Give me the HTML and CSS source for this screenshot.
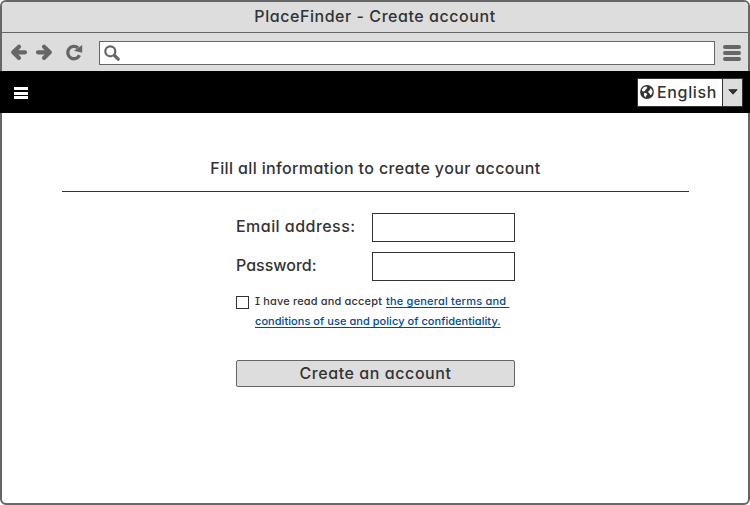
FILE: index.html
```html
<!DOCTYPE html>
<html lang="en">
<head>
<meta charset="utf-8">
<title>PlaceFinder - Create account</title>
<link rel="stylesheet" href="styles.css">
</head>
<body>
<div class="window">
  <div class="titlebar"><span class="window-title">PlaceFinder - Create account</span></div>
  <div class="toolbar">
    <svg class="nav" width="76" height="18" viewBox="0 0 76 18" fill="none" stroke="#666" stroke-width="4.2">
      <path d="M16 9.300H5M10 3.700L4.200 9.300L10 14.900" stroke-linecap="round" stroke-linejoin="round"/>
      <path d="M29 9.300H40M35 3.700L40.800 9.300L35 14.900" stroke-linecap="round" stroke-linejoin="round"/>
      <path d="M70.500 12.300A6.200 6.200 0 1 1 69 4.800" stroke-width="3.300"/>
      <path d="M73.200 2V9.800L65 7.800Z" fill="#666" stroke="none"/>
    </svg>
    <div class="address">
      <svg width="18" height="18" viewBox="0 0 18 18" fill="none" stroke="#666"><circle cx="6.300" cy="6.300" r="5" stroke-width="2.200"/><path d="M10.500 10.500L14.300 14.200" stroke-width="3.200" stroke-linecap="round"/></svg>
    </div>
    <div class="menu"><i></i><i></i><i></i></div>
  </div>
  <header class="appbar">
    <div class="burger"><i></i><i></i><i></i></div>
    <div class="language">
      <div class="language-value">
        <svg width="14" height="14" viewBox="0 0 14 14"><circle cx="7" cy="7" r="6.900" fill="#333"/><path d="M1.800 4.500L3.800 2.200L6 1.400L7.500 1.900L6.400 3L7 3.800L5.600 4.600L4.800 6L3.500 6.600L2.200 6ZM4.200 7.800L6.300 8.200L7.300 9.400L6.200 10.800L5.400 12.400L4.300 11L4 9.400ZM9.800 2.700L11.600 4.200L12.500 6.300L12.300 8L11.300 9.800L10.200 10.200L9.700 8.400L8.300 7.500L8.500 6L9.900 5.100L10.400 4Z" fill="#fff"/></svg>
        <span>English</span>
      </div>
      <div class="language-arrow"><svg width="10" height="6" viewBox="0 0 10 6"><path d="M.8 .7H9.200L5 5.200Z" fill="#333" stroke="#333" stroke-linejoin="round"/></svg></div>
    </div>
  </header>
  <main>
    <h1><span>Fill all information to create your account</span></h1>
    <form class="form">
      <div class="row"><label class="email" for="email">Email address:</label><input id="email" type="text"></div>
      <div class="row"><label class="password" for="password">Password:</label><input id="password" type="password"></div>
      <div class="terms">
        <span class="checkbox"></span>
        <p><span class="accept">I have read and accept</span><a class="link-a">the general terms and&nbsp;</a><br><a class="link-b">conditions of use and policy of confidentiality.</a></p>
      </div>
      <button type="button"><span>Create an account</span></button>
    </form>
  </main>
</div>
</body>
</html>
```
FILE: styles.css
```css
* { box-sizing: border-box; }
body { margin: 0; background: #fff; color: #333; font: 500 16px/20px Inter, "Liberation Sans", sans-serif; font-feature-settings: "cv11", "cv08"; }
.window { height: 505px; border: 2px solid #666; border-radius: 6px; display: flex; flex-direction: column; }
.titlebar { height: 31px; background: #ddd; border-bottom: 1px solid #666; border-radius: 4px 4px 0 0; display: flex; justify-content: center; padding-top: 4px; }
.window-title { letter-spacing: .55px; }
.toolbar { height: 38px; background: #ddd; display: flex; align-items: center; padding: 0 7px; }
.nav { overflow: visible; margin-right: 14px; }
.address { width: 616px; height: 24px; margin-top: 2px; border: 1px solid #666; background: #fff; padding: 3px 0 0 4px; line-height: 0; }
.menu { width: 18px; margin: 2px 0 0 8px; display: grid; gap: 2px; }
.menu i { height: 4px; border-radius: 2px; background: #666; }
.appbar { height: 42px; margin: 0 -2px; background: #000; display: flex; justify-content: space-between; align-items: center; padding: 0 7px 0 14px; }
.burger { width: 14px; display: grid; gap: 1.5px; padding-top: 2px; }
.burger i { height: 3px; background: #fff; }
.language { width: 106px; height: 29px; margin-top: 1px; border: 1px solid #333; background: #fff; display: flex; }
.language-value { width: 85px; display: flex; align-items: center; gap: 3px; padding: 0 0 2px 2px; letter-spacing: .65px; }
.language-arrow { width: 20px; background: #ddd; border-left: 1px solid #333; display: flex; align-items: center; justify-content: center; padding-bottom: 1px; }
main { padding: 0 59px 0 60px; }
h1 { height: 79px; margin: 0; padding-top: 45px; border-bottom: 1px solid #333; font-size: 16px; font-weight: 500; text-align: center; letter-spacing: .37px; }
.form { width: 279px; margin: 21px 0 0 174px; }
.row { display: flex; justify-content: space-between; height: 29px; margin-bottom: 10px; white-space: nowrap; }
label { padding-top: 3px; }
.email { letter-spacing: .46px; }
.password { letter-spacing: 0; }
input { width: 143px; height: 29px; border: 1px solid #333; background: #fff; padding: 0 6px; font: inherit; }
.terms { display: flex; height: 69px; font-size: 11px; white-space: nowrap; }
.checkbox { width: 13px; height: 13px; border: 1px solid #333; margin: 5px 6px 0 0; flex: none; }
.terms p { margin: 0; }
.accept { margin-right: 4px; letter-spacing: .16px; }
a { color: #004b8d; text-decoration: underline; text-underline-offset: 2px; }
.link-a { letter-spacing: .2px; }
.link-b { letter-spacing: .05px; }
button { display: block; width: 279px; height: 27px; padding: 0 0 2px; border: 1px solid #666; border-radius: 2px; background: #ddd; color: #333; font: inherit; font-feature-settings: inherit; letter-spacing: .57px; }
```
